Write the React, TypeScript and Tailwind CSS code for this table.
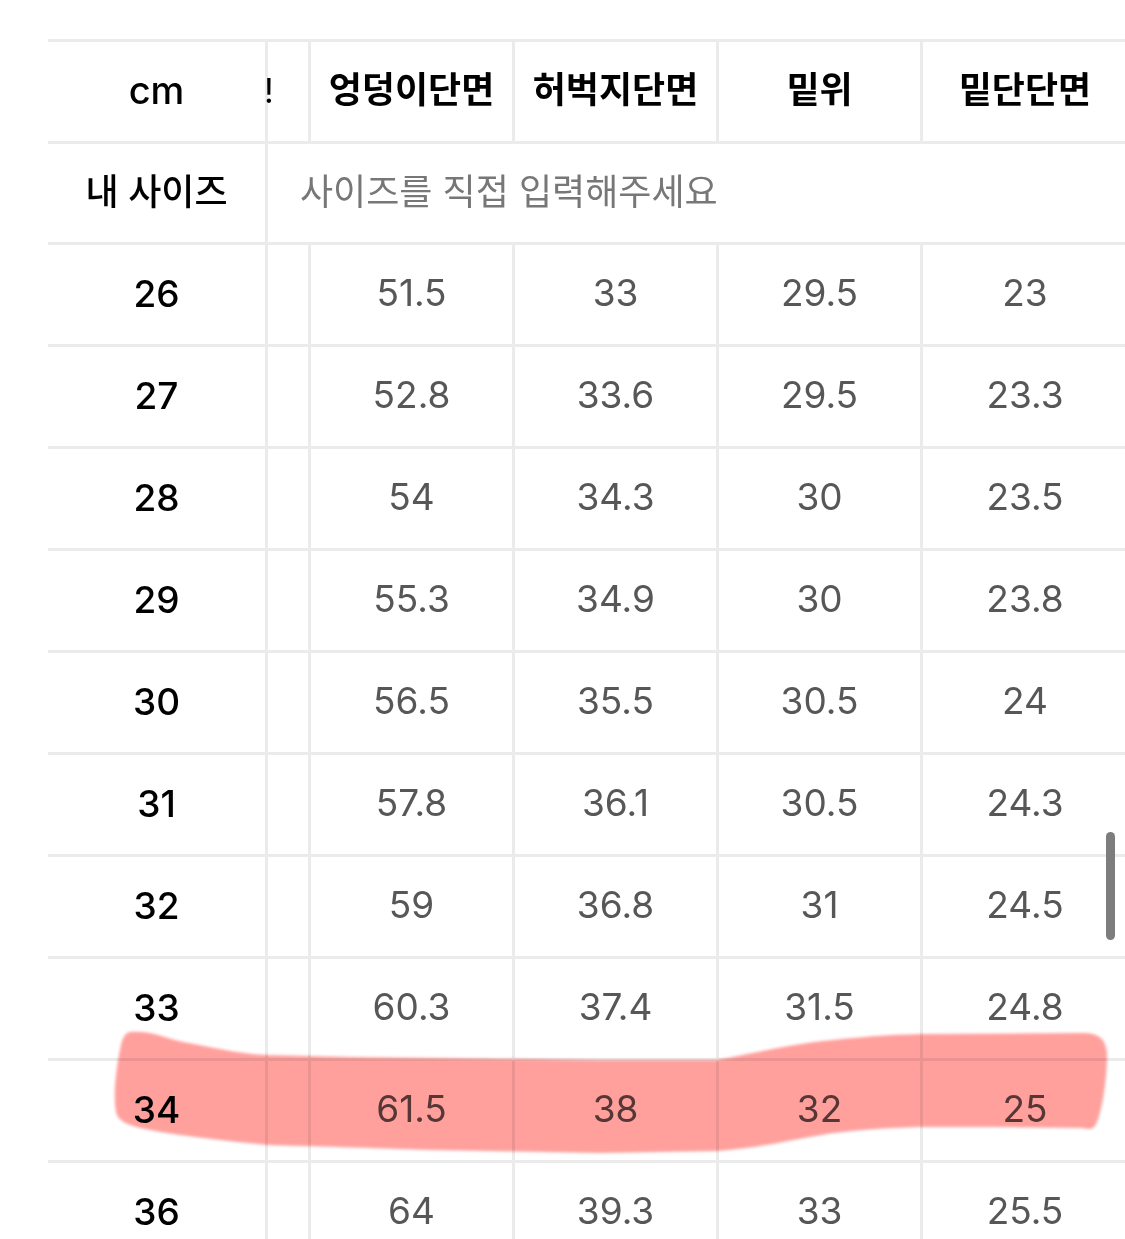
import React from 'react';

const HEADERS = ['엉덩이단면', '허벅지단면', '밑위', '밑단단면'];

const ROWS: [string, string[]][] = [
  ['26', ['51.5', '33', '29.5', '23']],
  ['27', ['52.8', '33.6', '29.5', '23.3']],
  ['28', ['54', '34.3', '30', '23.5']],
  ['29', ['55.3', '34.9', '30', '23.8']],
  ['30', ['56.5', '35.5', '30.5', '24']],
  ['31', ['57.8', '36.1', '30.5', '24.3']],
  ['32', ['59', '36.8', '31', '24.5']],
  ['33', ['60.3', '37.4', '31.5', '24.8']],
  ['34', ['61.5', '38', '32', '25']],
  ['36', ['64', '39.3', '33', '25.5']],
];

const font = { fontFamily: 'Inter, "Noto Sans CJK KR", "Noto Sans", sans-serif' };

// marker stroke drawn over the 34 row
const Highlight: React.FC = () => (
  <svg className="pointer-events-none absolute left-0 top-0 mix-blend-multiply" width="1125" height="1239">
    <defs>
      <filter id="soft" x="-5%" y="-20%" width="110%" height="140%">
        <feGaussianBlur stdDeviation="1.6" />
      </filter>
    </defs>
    <path
      d="M130 1032 C150 1030 165 1038 183 1042 C215 1048 240 1054 267 1055 L350 1057 L600 1060 L716 1060 C760 1052 790 1044 833 1040 C870 1036 900 1034 933 1034 L1083 1033 C1100 1033 1108 1040 1107 1060 C1106 1085 1102 1110 1097 1122 C1094 1130 1088 1130 1083 1128 L1000 1127 L920 1127 C880 1128 860 1130 833 1133 C790 1140 760 1148 717 1151 L600 1153 L433 1150 C370 1148 310 1146 267 1145 C220 1140 180 1136 150 1130 C130 1126 118 1122 116 1112 C113 1095 116 1070 120 1050 C122 1038 125 1033 130 1032 Z"
      fill="#ffa09d"
      filter="url(#soft)"
    />
  </svg>
);

const App: React.FC = () => {
  return (
    <div className="relative h-[1239px] w-[1125px] overflow-hidden bg-white" style={font}>
      <div className="pl-[48px] pt-[39px]">
        <div className="w-[1120px] border-t-[3px] border-[#ebebeb]">
          {/* header */}
          <div className="flex h-[102px] border-b-[3px] border-[#ebebeb]">
            <div className="flex w-[220px] items-center justify-center border-r-[3px] border-[#ebebeb] pb-[3px] text-[38px] font-medium text-black">
              cm
            </div>
            <div className="flex w-[43px] items-center border-r-[3px] border-[#ebebeb] pb-[3px] text-[34px] text-black">
              <span className="-ml-[4px]">!</span>
            </div>
            {HEADERS.map((h, i) => (
              <div
                key={h}
                className={`flex w-[204px] items-center justify-center pb-[3px] text-[36px] font-semibold text-black ${i < 3 ? 'border-r-[3px] border-[#ebebeb]' : ''}`}
              >
                {h}
              </div>
            ))}
          </div>
          {/* my size */}
          <div className="flex h-[101px] border-b-[3px] border-[#ebebeb]">
            <div className="flex w-[220px] items-center justify-center border-r-[3px] border-[#ebebeb] pb-[3px] text-[36px] font-medium text-black">
              내 사이즈
            </div>
            <div className="flex flex-1 items-center pb-[3px] pl-[32px] text-[36px] text-[#777]">
              사이즈를 직접 입력해주세요
            </div>
          </div>
          {ROWS.map(([size, vals]) => (
            <div key={size} className="flex h-[102px] border-b-[3px] border-[#ebebeb]">
              <div className="flex w-[220px] items-center justify-center border-r-[3px] border-[#ebebeb] pb-[2px] text-[37px] font-medium text-black">
                {size}
              </div>
              <div className="w-[43px] border-r-[3px] border-[#ebebeb]" />
              {vals.map((v, i) => (
                <div
                  key={i}
                  className={`flex w-[204px] items-center justify-center pb-[4px] text-[37px] text-[#575757] ${i < 3 ? 'border-r-[3px] border-[#ebebeb]' : ''}`}
                >
                  {v}
                </div>
              ))}
            </div>
          ))}
        </div>
      </div>
      <Highlight />
      <div className="absolute left-[1106px] top-[832px] h-[108px] w-[9px] rounded-full bg-[#7d7d7d]" />
    </div>
  );
};

export default App;
